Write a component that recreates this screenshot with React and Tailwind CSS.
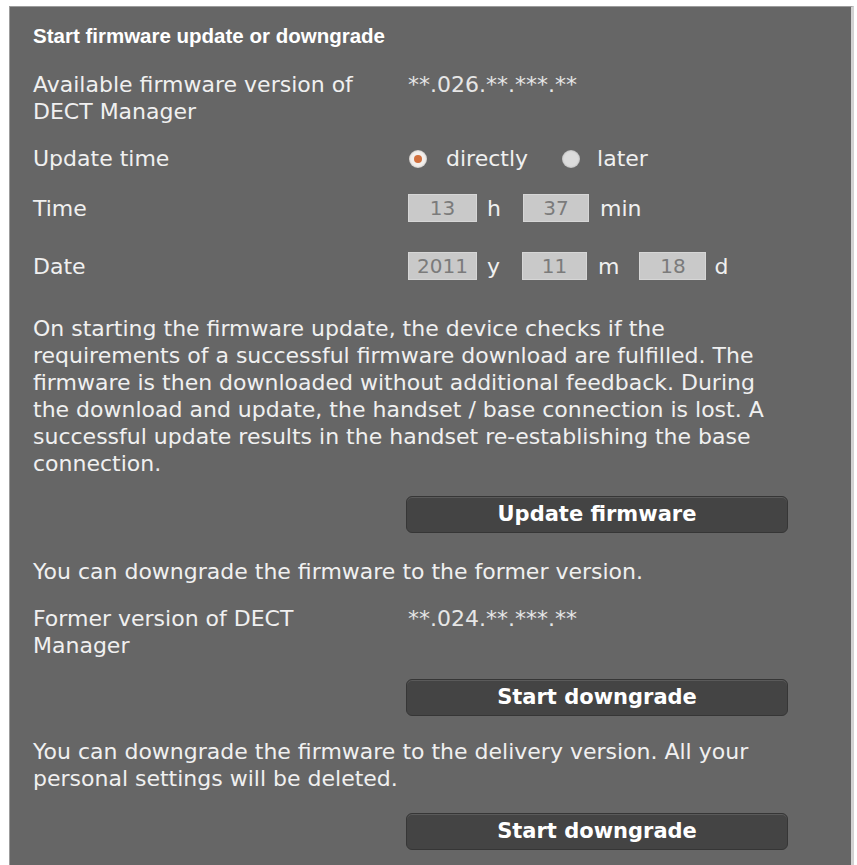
/**
 * FirmwareUpdate — DECT Manager firmware update / downgrade panel.
 */

function Radio({ checked }) {
  if (checked) {
    return (
      <span className="flex h-[18px] w-[18px] items-center justify-center rounded-full bg-[#f3efec] shadow-[inset_0_0_2px_rgba(0,0,0,0.35)]">
        <span className="h-[8px] w-[8px] rounded-full bg-[#d2703e]" />
      </span>
    );
  }
  return <span className="block h-[18px] w-[18px] rounded-full bg-[#dcdcdc] shadow-[inset_0_0_2px_rgba(0,0,0,0.3)]" />;
}

function Field({ value, width }) {
  return (
    <span
      className={`flex h-[28px] items-center justify-center border border-[#d6d6d6] bg-[#c9c9c9] text-[20px] text-[#7b7b7b] ${width}`}
    >
      {value}
    </span>
  );
}

function ActionButton({ children }) {
  return (
    <button className="ml-[373px] flex h-[37px] w-[382px] items-center justify-center rounded-[6px] border border-[#363636] bg-[#444] font-bold text-[21px] text-white shadow-[inset_0_1px_0_rgba(255,255,255,0.12)]">
      {children}
    </button>
  );
}

export default function App() {
  return (
    <div className="min-h-[865px] bg-white pl-[9px] pt-[6px]">
      <div className="min-h-[859px] w-[845px] border-l border-t border-[#9c9c9c] border-r-[3px] border-r-[#d2d2d2] bg-[#666] pl-[23px] pt-[17px] font-['DejaVu_Sans',sans-serif] text-[22px] leading-[27px] text-[#f0f0f0]">
        {/* Title */}
        <h2 className="font-['Liberation_Sans',sans-serif] text-[20.5px] font-bold leading-[24px] text-white">
          Start firmware update or downgrade
        </h2>

        {/* Available version */}
        <div className="mt-[23px] grid grid-cols-[375px_1fr]">
          <div>
            Available firmware version of
            <br />
            DECT Manager
          </div>
          <div className="text-[#e6e6e6]">**.026.**.***.**</div>
        </div>

        {/* Update time */}
        <div className="mt-[20px] grid grid-cols-[375px_1fr]">
          <div>Update time</div>
          <div className="flex items-center">
            <span className="ml-[1px]">
              <Radio checked />
            </span>
            <span className="ml-[19px]">directly</span>
            <span className="ml-[34px]">
              <Radio />
            </span>
            <span className="ml-[17px]">later</span>
          </div>
        </div>

        {/* Time */}
        <div className="mt-[22px] grid h-[28px] grid-cols-[375px_1fr] items-center">
          <div>Time</div>
          <div className="flex items-center">
            <Field value="13" width="w-[69px]" />
            <span className="ml-[10px]">h</span>
            <span className="ml-[22px]">
              <Field value="37" width="w-[66px]" />
            </span>
            <span className="ml-[11px]">min</span>
          </div>
        </div>

        {/* Date */}
        <div className="mt-[30px] grid h-[28px] grid-cols-[375px_1fr] items-center">
          <div>Date</div>
          <div className="flex items-center">
            <Field value="2011" width="w-[69px]" />
            <span className="ml-[10px]">y</span>
            <span className="ml-[22px]">
              <Field value="11" width="w-[65px]" />
            </span>
            <span className="ml-[11px]">m</span>
            <span className="ml-[20px]">
              <Field value="18" width="w-[67px]" />
            </span>
            <span className="ml-[8px]">d</span>
          </div>
        </div>

        {/* Info text */}
        <p className="mt-[35px] whitespace-nowrap">
          On starting the firmware update, the device checks if the
          <br />
          requirements of a successful firmware download are fulfilled. The
          <br />
          firmware is then downloaded without additional feedback. During
          <br />
          the download and update, the handset / base connection is lost. A
          <br />
          successful update results in the handset re-establishing the base
          <br />
          connection.
        </p>

        <div className="mt-[19px]">
          <ActionButton>Update firmware</ActionButton>
        </div>

        <p className="mt-[25px]">You can downgrade the firmware to the former version.</p>

        <div className="mt-[20px] grid grid-cols-[375px_1fr]">
          <div>
            Former version of DECT
            <br />
            Manager
          </div>
          <div className="text-[#e6e6e6]">**.024.**.***.**</div>
        </div>

        <div className="mt-[20px]">
          <ActionButton>Start downgrade</ActionButton>
        </div>

        <p className="mt-[22px] whitespace-nowrap">
          You can downgrade the firmware to the delivery version. All your
          <br />
          personal settings will be deleted.
        </p>

        <div className="mt-[21px]">
          <ActionButton>Start downgrade</ActionButton>
        </div>
      </div>
    </div>
  );
}
